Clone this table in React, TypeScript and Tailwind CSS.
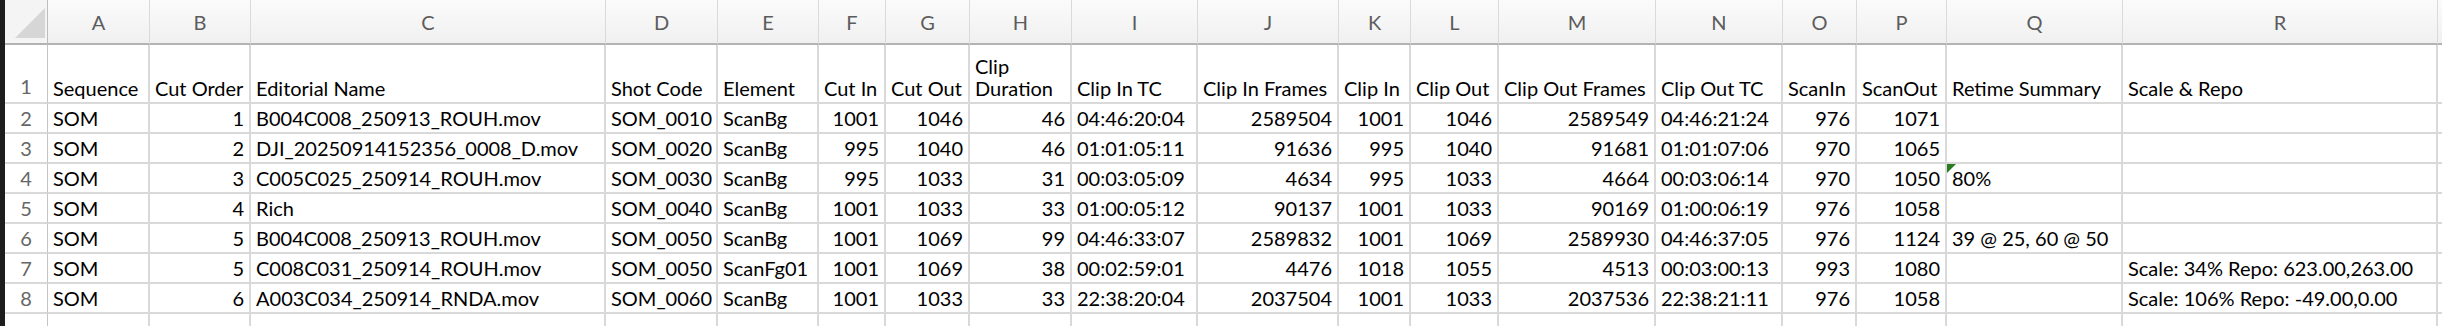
import { Fragment } from 'react';

const letters = ['A', 'B', 'C', 'D', 'E', 'F', 'G', 'H', 'I', 'J', 'K', 'L', 'M', 'N', 'O', 'P', 'Q', 'R', ''];

// right-aligned (numeric) columns
const numeric = [false, true, false, false, false, true, true, true, false, true, true, true, true, false, true, true, false, false, false];

const headers = [
  'Sequence', 'Cut Order', 'Editorial Name', 'Shot Code', 'Element', 'Cut In', 'Cut Out', 'Clip\nDuration',
  'Clip In TC', 'Clip In Frames', 'Clip In', 'Clip Out', 'Clip Out Frames', 'Clip Out TC', 'ScanIn', 'ScanOut',
  'Retime Summary', 'Scale & Repo', '',
];

const rows: string[][] = [
  ['SOM', '1', 'B004C008_250913_ROUH.mov', 'SOM_0010', 'ScanBg', '1001', '1046', '46', '04:46:20:04', '2589504', '1001', '1046', '2589549', '04:46:21:24', '976', '1071', '', '', ''],
  ['SOM', '2', 'DJI_20250914152356_0008_D.mov', 'SOM_0020', 'ScanBg', '995', '1040', '46', '01:01:05:11', '91636', '995', '1040', '91681', '01:01:07:06', '970', '1065', '', '', ''],
  ['SOM', '3', 'C005C025_250914_ROUH.mov', 'SOM_0030', 'ScanBg', '995', '1033', '31', '00:03:05:09', '4634', '995', '1033', '4664', '00:03:06:14', '970', '1050', '80%', '', ''],
  ['SOM', '4', 'Rich', 'SOM_0040', 'ScanBg', '1001', '1033', '33', '01:00:05:12', '90137', '1001', '1033', '90169', '01:00:06:19', '976', '1058', '', '', ''],
  ['SOM', '5', 'B004C008_250913_ROUH.mov', 'SOM_0050', 'ScanBg', '1001', '1069', '99', '04:46:33:07', '2589832', '1001', '1069', '2589930', '04:46:37:05', '976', '1124', '39 @ 25, 60 @ 50', '', ''],
  ['SOM', '5', 'C008C031_250914_ROUH.mov', 'SOM_0050', 'ScanFg01', '1001', '1069', '38', '00:02:59:01', '4476', '1018', '1055', '4513', '00:03:00:13', '993', '1080', '', 'Scale: 34% Repo: 623.00,263.00', ''],
  ['SOM', '6', 'A003C034_250914_RNDA.mov', 'SOM_0060', 'ScanBg', '1001', '1033', '33', '22:38:20:04', '2037504', '1001', '1033', '2037536', '22:38:21:11', '976', '1058', '', 'Scale: 106% Repo: -49.00,0.00', ''],
  ['', '', '', '', '', '', '', '', '', '', '', '', '', '', '', '', '', '', ''],
];

function Corner() {
  return (
    <div className="relative border-r border-b-2 border-r-[#bdbdbd] border-b-[#b3b3b3] bg-[#f4f4f4]">
      <svg className="absolute left-[10px] top-[8px]" width="30" height="30" viewBox="0 0 30 30">
        <polygon points="0,30 30,0 30,30" fill="#d6d6d6" />
      </svg>
    </div>
  );
}

export default function App() {
  return (
    <div className="flex h-[326px] w-[2442px] overflow-hidden bg-white font-['Lato',sans-serif] text-black">
      <div className="w-[5px] shrink-0 bg-[#1d1d1d]" />
      <div className="flex min-w-0 flex-1 flex-col">
        <div className="h-[2px] bg-[#cfcfcf]" />
        <div className="h-[2px] bg-[#8e8e8e]" />
        <div className="grid grid-cols-[43px_102px_101px_355px_112px_101px_67px_84px_102px_126px_141px_72px_88px_157px_127px_74px_90px_176px_315px_40px] grid-rows-[45px_59px_30px_30px_30px_30px_30px_30px_30px_30px]">
          <Corner />
          {letters.map((l, i) => (
            <div
              key={i}
              className="flex items-center justify-center border-r border-b-2 border-r-[#dadada] border-b-[#b3b3b3] bg-gradient-to-b from-[#fbfbfb] to-[#f0f0f0] text-[20px] text-[#5c5c5c]"
            >
              {l}
            </div>
          ))}

          <div className="flex items-end justify-center border-r border-b-2 border-r-[#c4c4c4] border-b-[#d9d9d9] pb-[3px] text-[20px] leading-[26px] text-[#666]">
            1
          </div>
          {headers.map((h, i) => (
            <div
              key={i}
              className="flex items-end overflow-hidden whitespace-pre-line border-r-2 border-b-2 border-[#d9d9d9] px-[5px] pb-[3px] text-[20px] leading-[22px]"
            >
              {h}
            </div>
          ))}

          {rows.map((row, r) => (
            <Fragment key={r}>
              <div className="flex items-center justify-center border-r border-b-2 border-r-[#c4c4c4] border-b-[#d9d9d9] text-[20px] text-[#666]">
                {r < 7 ? r + 2 : ''}
              </div>
              {row.map((v, c) => (
                <div
                  key={c}
                  className={
                    numeric[c]
                      ? 'relative flex items-center justify-end whitespace-nowrap border-r-2 border-b-2 border-[#d9d9d9] px-[5px] text-[20px]'
                      : 'relative flex items-center whitespace-nowrap border-r-2 border-b-2 border-[#d9d9d9] px-[5px] text-[20px]'
                  }
                >
                  {r === 2 && c === 16 && (
                    <svg className="absolute left-0 top-0" width="9" height="9" viewBox="0 0 9 9">
                      <polygon points="0,0 9,0 0,9" fill="#2a7a22" />
                    </svg>
                  )}
                  {v}
                </div>
              ))}
            </Fragment>
          ))}
        </div>
      </div>
    </div>
  );
}
